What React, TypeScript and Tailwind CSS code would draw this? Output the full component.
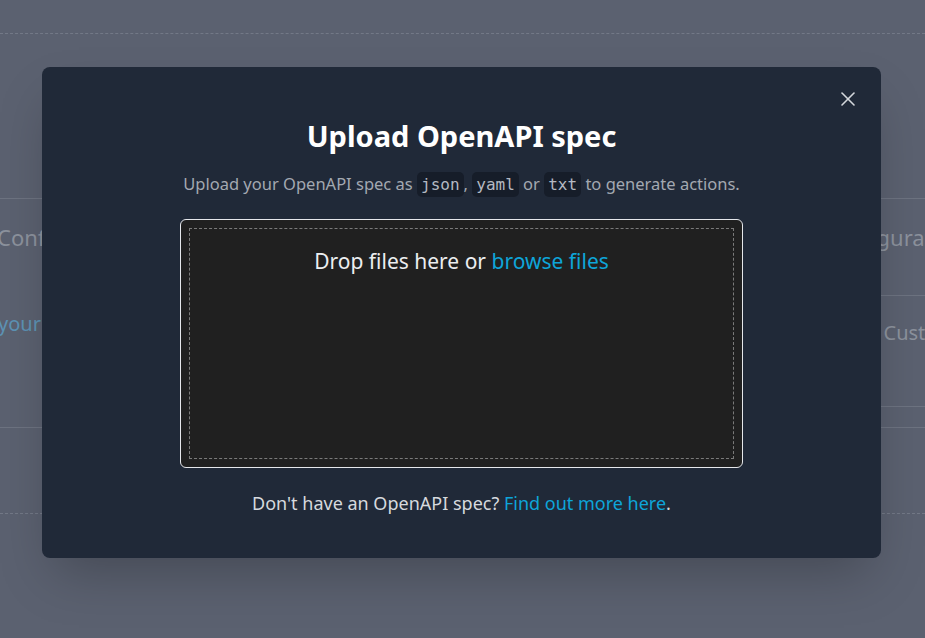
import { X } from 'lucide-react';

const sans = "font-['Noto_Sans','Open_Sans',sans-serif]";

function Code({ children }: { children: string }) {
  return (
    <code className="rounded-[5px] bg-[#161d29] px-[4px] py-[3px] font-['DejaVu_Sans_Mono',monospace] text-[16px] text-[#b4b9c2]">
      {children}
    </code>
  );
}

export default function App() {
  return (
    <div className={`relative h-[638px] w-full overflow-hidden bg-[#5b6170] ${sans}`}>
      {/* Page behind the dialog */}
      <div className="flex flex-col">
        <div className="h-[33px]" />
        <div className="h-[165px] border-t border-dashed border-[#737987]" />
        <div className="grid grid-cols-2 border-t border-[#6d7381]">
          <div className="flex h-[229px] flex-col border-b border-[#6d7381]">
            <div className="-ml-[3px] pt-[22px] text-[22px] text-[#8c929d]">Configure</div>
            <div className="-ml-[2px] pt-[55px] text-[20px] text-[#5d93b5]">your</div>
          </div>
          <div className="flex flex-col">
            <div className="h-[97px] border-b border-[#6d7381] pl-[360px] pt-[22px] text-[22px] text-[#8c929d]">
              Configuration
            </div>
            <div className="h-[111px] border-b border-[#6d7381] pl-[421px] pt-[22px] text-[20px] text-[#8c929d]">
              Custom
            </div>
            <div className="h-[21px] border-b border-[#6d7381]" />
          </div>
        </div>
        <div className="h-[85px]" />
        <div className="border-t border-dashed border-[#737987]" />
      </div>

      {/* Dialog */}
      <div className="absolute inset-0 flex items-start justify-start pl-[42px] pt-[67px]">
        <div className="relative flex h-[491px] w-[839px] flex-col items-center rounded-lg bg-[#202938] pt-[49px] shadow-2xl">
          <button className="absolute right-[21px] top-[20px] text-[#d4d7dc]">
            <X size={24} strokeWidth={1.6} />
          </button>
          <h2 className="text-[29px] font-bold leading-[40px] text-white">Upload OpenAPI spec</h2>
          <p className="mt-[15px] text-[16.5px] leading-[26px] text-[#a3a8b1]">
            Upload your OpenAPI spec as <Code>json</Code>, <Code>yaml</Code> or <Code>txt</Code> to generate actions.
          </p>
          <div className="mt-[21px] h-[249px] w-[563px] rounded-[6px] border border-[#e5e7eb] bg-[#202020] p-[8px]">
            <div className="flex h-full flex-col items-center border border-dashed border-[#7a7a7a] pt-[17px]">
              <p className="text-[21px] leading-[30px] text-[#eceef0]">
                Drop files here or <span className="text-[#0ea5d9]">browse files</span>
              </p>
            </div>
          </div>
          <p className="mt-[22px] text-[18px] leading-[26px] text-[#d6d9de]">
            Don't have an OpenAPI spec? <a className="text-[#0ea5d9]">Find out more here</a>.
          </p>
        </div>
      </div>
    </div>
  );
}
